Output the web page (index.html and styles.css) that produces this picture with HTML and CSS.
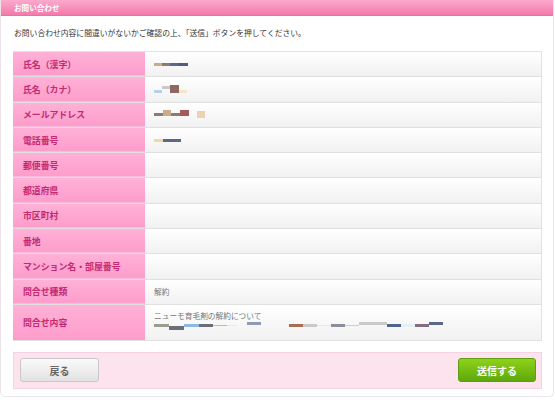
FILE: index.html
```html
<!DOCTYPE html>
<html lang="ja">
<head>
<meta charset="utf-8">
<link rel="stylesheet" href="styles.css">
</head>
<body>
<div class="panel">
  <div class="panel-head">お問い合わせ</div>
  <p class="intro">お問い合わせ内容に間違いがないかご確認の上、「送信」ボタンを押してください。</p>
  <div class="form">
    <div class="row"><div class="lab">氏名（漢字）</div><div class="val"><span class="mz"><i class="c-tan w8"></i><i class="c-gbr w8"></i><i class="c-bg w8"></i><i class="c-bg2 w10"></i></span></div></div>
    <div class="row"><div class="lab">氏名（カナ）</div><div class="val"><span class="mz kana"><i class="c-lb w8 lo"></i><i class="c-lg w8 hi"></i><i class="c-dbr w9 tall"></i><i class="c-cr w8 lo"></i></span></div></div>
    <div class="row"><div class="lab">メールアドレス</div><div class="val"><span class="mz mail"><i class="c-gbr w9"></i><i class="c-tan w8 tallup"></i><i class="c-gbr w9"></i><i class="c-lbred w9 tallup"></i><i class="gap w8"></i><i class="c-tan2 w8 sq"></i></span></div></div>
    <div class="row"><div class="lab">電話番号</div><div class="val"><span class="mz"><i class="c-cr2 w9"></i><i class="c-bg w18"></i></span></div></div>
    <div class="row"><div class="lab">郵便番号</div><div class="val"></div></div>
    <div class="row"><div class="lab">都道府県</div><div class="val"></div></div>
    <div class="row"><div class="lab">市区町村</div><div class="val"></div></div>
    <div class="row"><div class="lab">番地</div><div class="val"></div></div>
    <div class="row"><div class="lab">マンション名・部屋番号</div><div class="val"></div></div>
    <div class="row"><div class="lab">問合せ種類</div><div class="val text">解約</div></div>
    <div class="row big"><div class="lab">問合せ内容</div><div class="val text">
      <div class="msg">ニューモ育毛剤の解約について</div>
      <div class="mz2">
        <i class="c-gry w15"></i><i class="c-dgr w15 dn"></i><i class="c-blu w15"></i><i class="c-dgr w14"></i><i class="c-org w14 thin"></i><i class="c-cr w10 thin"></i><i class="gap w10"></i><i class="c-gbl w14 up"></i>
        <i class="gap w28"></i><i class="c-brn w14"></i><i class="c-lg w14"></i><i class="c-cr w14 thin"></i><i class="c-sl w14"></i><i class="c-org2 w14 thin"></i><i class="c-lg w14 up"></i><i class="c-lg w14 up"></i><i class="c-nav w14"></i><i class="c-wh w14"></i><i class="c-pur w14"></i><i class="c-bg w14 up"></i>
      </div>
    </div></div>
  </div>
  <div class="actions">
    <button class="btn back">戻る</button>
    <button class="btn send">送信する</button>
  </div>
</div>
</body>
</html>
```
FILE: styles.css
```css
* { box-sizing: border-box; }
html, body { margin: 0; padding: 0; background: #fff; }
body { font-family: "Noto Sans CJK JP", "Noto Sans", sans-serif; color: #333; }

.panel {
  width: 554px;
  height: 397px;
  border: 1px solid #ece4e8;
  border-top: none;
  border-radius: 0 0 5px 5px;
  background: #fff;
  display: flex;
  flex-direction: column;
}
.panel-head {
  height: 16px;
  background: linear-gradient(#fba9cc, #f37aab);
  color: #fff;
  font-size: 7.6px;
  font-weight: bold;
  line-height: 15px;
  padding-left: 13px;
  border-bottom: 1px solid #f06ea2;
}
.intro {
  margin: 12px 0 0 13px;
  font-size: 7.8px;
  line-height: 10px;
  color: #333;
}
.form {
  margin: 13px 12px 0 12px;
  width: 529px;
  border: 1px solid #e2e2e2;
  border-left: none;
}
.row {
  display: grid;
  grid-template-columns: 132px 1fr;
  height: 25.3px;
  border-bottom: 1px solid #e0e0e0;
}
.row:last-child { border-bottom: none; }
.row.big { height: 35px; }
.lab {
  background: linear-gradient(#ffb1d7, #fd9ccb);
  color: #c42a74;
  font-size: 8.9px;
  font-weight: bold;
  padding-left: 10px;
  display: flex;
  align-items: center;
  box-shadow: inset 0 -1px 0 #f7bcd9;
}
.row:last-child .lab { box-shadow: none; }
.val {
  background: linear-gradient(#ffffff, #f1f1f1);
  padding-left: 9px;
  display: flex;
  align-items: center;
}
.val.text { color: #777; font-size: 7.7px; }
.row.big .val { flex-direction: column; align-items: flex-start; justify-content: flex-start; padding-top: 6px; }
.msg { line-height: 9px; color: #777; }

.mz { display: flex; align-items: center; height: 8px; }
.mz i, .mz2 i { display: block; height: 3px; }
.mz2 { display: flex; align-items: center; height: 10px; margin-top: 1px; }
.w3 { width: 3px; } .w4 { width: 4px; } .w8 { width: 8px; } .w9 { width: 9px; } .w10 { width: 10px; }
.w14 { width: 14px; } .w15 { width: 15px; } .w18 { width: 18px; } .w28 { width: 28px; }
.gap { background: transparent; }
.lo { margin-top: 5px; } .hi { margin-top: -3px; }
.tall { height: 8px !important; }
.tallup { height: 6px !important; margin-top: -3px; }
.sq { height: 7px !important; }
.dn { margin-top: 5px; height: 4px !important; }
.up { margin-top: -4px; }
.thin { height: 1px !important; }

.c-tan { background: #cbab8c; }
.c-tan2 { background: #ecd2b4; }
.c-gbr { background: #8c7b70; }
.c-bg { background: #5b6888; }
.c-bg2 { background: #4f5d7e; }
.c-lb { background: #b8d1ea; }
.c-lg { background: #c9c9c9; }
.c-dbr { background: #8e6862; }
.c-cr { background: #f6e6c4; }
.c-cr2 { background: #f1d6a6; }
.c-lbred { background: #a45a5a; }
.c-gry { background: #9c9c8e; }
.c-dgr { background: #6b6f78; }
.c-blu { background: #8fb7df; }
.c-org { background: #f0b070; }
.c-org2 { background: #f5c58e; }
.c-gbl { background: #8e9ab8; }
.c-brn { background: #a86e52; }
.c-sl { background: #8a8f9e; }
.c-nav { background: #4d6690; }
.c-wh { background: #e8eef6; }
.c-pur { background: #83707e; }

.actions {
  margin: 11px 12px 0 12px;
  width: 529px;
  height: 37px;
  background: #fde3ee;
  border: 1px solid #f6d3e2;
  display: flex;
  justify-content: space-between;
  align-items: center;
  padding: 0 5px 0 6px;
}
.btn {
  width: 79px;
  height: 24px;
  border-radius: 3px;
  font-family: inherit;
  font-size: 10px;
  font-weight: bold;
  padding: 0;
  cursor: pointer;
}
.back {
  background: linear-gradient(#fafafa, #e2e2e2);
  border: 1px solid #c9c9c9;
  color: #666;
}
.send {
  background: linear-gradient(#8fd21b, #5ea80a);
  border: 1px solid #5c9d12;
  color: #fff;
  width: 78px;
}
```
